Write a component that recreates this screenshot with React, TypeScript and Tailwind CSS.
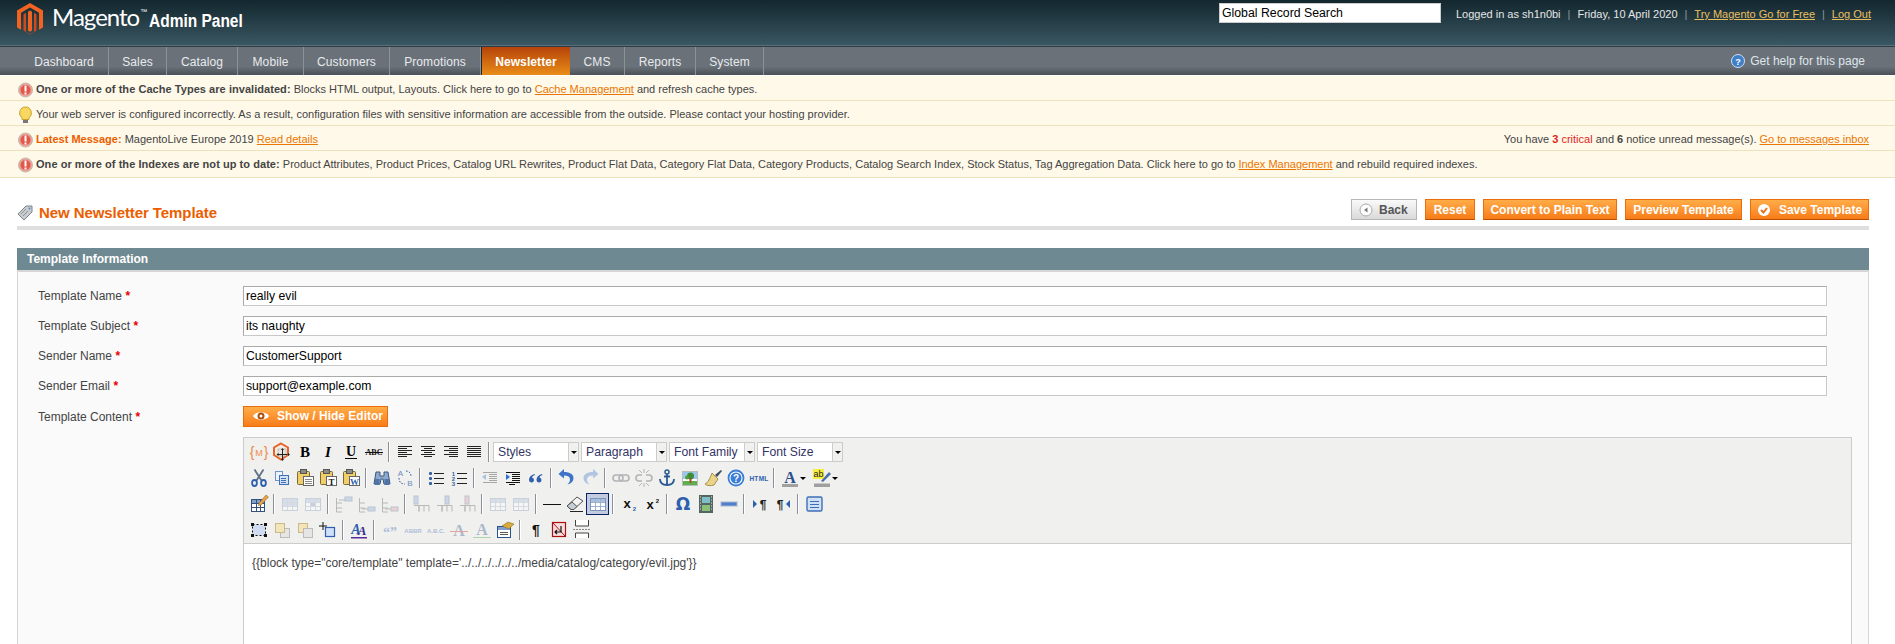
import type { ReactNode } from "react";

const navItems = [
  { name: "Dashboard", width: "w-[89px]" },
  { name: "Sales", width: "w-[58px]" },
  { name: "Catalog", width: "w-[71px]" },
  { name: "Mobile", width: "w-[66px]" },
  { name: "Customers", width: "w-[86px]" },
  { name: "Promotions", width: "w-[91px]" },
  { name: "Newsletter", width: "w-[89px]" },
  { name: "CMS", width: "w-[55px]" },
  { name: "Reports", width: "w-[71px]" },
  { name: "System", width: "w-[68px]" },
];
const fields = [
  { label: "Template Name", value: "really evil" },
  { label: "Template Subject", value: "its naughty" },
  { label: "Sender Name", value: "CustomerSupport" },
  { label: "Sender Email", value: "support@example.com" },
];

function Lines({ rows, color = "#222" }: { rows: [number, number, number][]; color?: string }) {
  return (
    <>
      {rows.map(([y, a, b], i) => (
        <line key={i} x1={a} x2={b} y1={y + 0.5} y2={y + 0.5} stroke={color} />
      ))}
    </>
  );
}

function Sv({ children, faded }: { children: ReactNode; faded?: boolean }) {
  return (
    <svg width="20" height="20" viewBox="0 0 20 20" className={faded ? "opacity-35" : ""}>
      {children}
    </svg>
  );
}

function Doc({ x, y, w = 9, h = 11, fill = "#fff", stroke = "#3f6fb5" }: { x: number; y: number; w?: number; h?: number; fill?: string; stroke?: string }) {
  return <rect x={x + 0.5} y={y + 0.5} width={w} height={h} fill={fill} stroke={stroke} />;
}

function Clipboard({ letter, color = "#222" }: { letter?: string; color?: string }) {
  return (
    <Sv>
      <rect x="2.5" y="3.5" width="12" height="13" rx="1" fill="#f0cf6a" stroke="#7a6a30" />
      <rect x="5.5" y="1.5" width="6" height="4" fill="#8a8a8a" stroke="#555" />
      <rect x="8.5" y="8.5" width="10" height="9" fill="#fff" stroke="#666" />
      {letter ? (
        <text x="13.5" y="16.5" fontSize="9" fontWeight="700" textAnchor="middle" fontFamily="Liberation Serif" fill={color}>
          {letter}
        </text>
      ) : (
        <Lines rows={[[11, 10, 17], [13, 10, 17], [15, 10, 17]]} color="#888" />
      )}
    </Sv>
  );
}

function Grid({ faded, hi }: { faded?: boolean; hi?: "row" | "cell" | "all" }) {
  return (
    <Sv faded={faded}>
      <rect x="2.5" y="4.5" width="15" height="12" fill="#fff" stroke="#7d95b8" />
      <rect x="3" y="5" width="14" height="3" fill="#a9bfdf" />
      {hi === "row" && <rect x="3" y="9" width="14" height="3" fill="#a9bfdf" />}
      {hi === "cell" && <rect x="8" y="9" width="5" height="3" fill="#7d95b8" />}
      <Lines rows={[[8, 3, 17], [12, 3, 17]]} color="#9fb2cc" />
      <line x1="7.5" x2="7.5" y1="5" y2="16" stroke="#9fb2cc" />
      <line x1="12.5" x2="12.5" y1="5" y2="16" stroke="#9fb2cc" />
    </Sv>
  );
}

function TableOp({ kind }: { kind: "a" | "b" | "c" | "d" | "e" | "f" }) {
  const col = kind === "d" || kind === "e" || kind === "f";
  return (
    <Sv faded>
      {col ? (
        <>
          <path d="M3 11.5H8V17.5M8 11.5V17.5M8 11.5H13V17.5M13 11.5H18V17.5" fill="none" stroke="#555" />
          <rect x={kind === "d" ? 3 : kind === "e" ? 11 : 8} y="2" width="4" height="8" fill={kind === "f" ? "#e59a9a" : "#8aa8d8"} stroke="#5a78a8" />
        </>
      ) : (
        <>
          <path d="M2.5 4V9H8M2.5 9V14H8M2.5 14V18H8" fill="none" stroke="#555" />
          <rect x="11" y={kind === "a" ? 3 : 13} width="7" height="4" fill={kind === "c" ? "#e59a9a" : "#8aa8d8"} stroke="#5a78a8" />
          <path d={kind === "a" ? "M5 6H11" : "M5 15H11"} stroke="#555" />
        </>
      )}
    </Sv>
  );
}

const A = ({ fill, bar }: { fill: string; bar: string }) => (
  <Sv>
    <text x="10" y="15" fontSize="16" fontWeight="700" textAnchor="middle" fontFamily="Liberation Serif" fill={fill}>
      A
    </text>
    <rect x="2" y="16" width="16" height="3" fill={bar} />
  </Sv>
);

const icons: Record<string, ReactNode> = {
  widget: (
    <Sv>
      <text x="3" y="14.5" fontSize="14" textAnchor="middle" fontFamily="Liberation Sans" fill="#ee8a4c">{"{"}</text>
      <text x="10" y="13.5" fontSize="9" textAnchor="middle" fontFamily="Liberation Sans" fill="#ee8a4c">M</text>
      <text x="17" y="14.5" fontSize="14" textAnchor="middle" fontFamily="Liberation Sans" fill="#ee8a4c">{"}"}</text>
    </Sv>
  ),
  variable: (
    <Sv>
      <path d="M9 1.5L16 5.5V13L9 17.5L2 13V5.5Z" fill="#f5ece4" stroke="#e8642a" strokeWidth="2" />
      <rect x="6" y="7" width="8" height="7" fill="#e9e4de" stroke="#999" strokeWidth="0.5" />
      <path d="M10.5 8V17M6 12.5H15.5" stroke="#222" />
      <path d="M4.5 12.5L6.5 11V14ZM18 12.5L16 11V14ZM10.5 6L9 8H12ZM10.5 19L9 17H12Z" fill="#222" />
    </Sv>
  ),
  bold: <Sv><text x="10" y="15" fontSize="15" fontWeight="700" textAnchor="middle" fontFamily="Liberation Serif" fill="#000">B</text></Sv>,
  italic: <Sv><text x="10" y="15" fontSize="15" fontWeight="700" fontStyle="italic" textAnchor="middle" fontFamily="Liberation Serif" fill="#000">I</text></Sv>,
  underline: (
    <Sv>
      <text x="10" y="14" fontSize="14" fontWeight="700" textAnchor="middle" fontFamily="Liberation Serif" fill="#000">U</text>
      <rect x="4" y="16" width="12" height="1" fill="#000" />
    </Sv>
  ),
  strike: (
    <Sv>
      <text x="10" y="13" fontSize="8" fontWeight="700" textAnchor="middle" fontFamily="Liberation Serif" fill="#111">ABC</text>
      <rect x="1" y="10" width="18" height="1" fill="#111" />
    </Sv>
  ),
  left: <Sv><Lines rows={[[4, 3, 17], [6, 3, 12], [8, 3, 17], [10, 3, 12], [12, 3, 17], [14, 3, 12]]} /></Sv>,
  center: <Sv><Lines rows={[[4, 3, 17], [6, 6, 14], [8, 3, 17], [10, 6, 14], [12, 3, 17], [14, 6, 14]]} /></Sv>,
  right: <Sv><Lines rows={[[4, 3, 17], [6, 8, 17], [8, 3, 17], [10, 8, 17], [12, 3, 17], [14, 8, 17]]} /></Sv>,
  justify: <Sv><Lines rows={[[4, 3, 17], [6, 3, 17], [8, 3, 17], [10, 3, 17], [12, 3, 17], [14, 3, 17]]} /></Sv>,
  cut: (
    <Sv>
      <path d="M5.5 1.5L12.5 12.5M14.5 1.5L7.5 12.5" stroke="#5f7188" strokeWidth="1.8" />
      <ellipse cx="5.5" cy="15" rx="2.4" ry="3" fill="none" stroke="#2f5fae" strokeWidth="1.8" />
      <ellipse cx="14.5" cy="15" rx="2.4" ry="3" fill="none" stroke="#2f5fae" strokeWidth="1.8" />
    </Sv>
  ),
  copy: (
    <Sv>
      <Doc x={3} y={3} w={7} h={9} fill="#eef3fb" stroke="#6f93c8" />
      <Doc x={7} y={7} w={9} h={9} fill="#cfe0f7" />
      <Lines rows={[[10, 9, 14], [12, 9, 14], [14, 9, 14]]} color="#3f6fb5" />
    </Sv>
  ),
  paste: <Clipboard />,
  pasteText: <Clipboard letter="T" />,
  pasteWord: <Clipboard letter="W" color="#2f5fae" />,
  find: (
    <Sv>
      <path d="M4 4h4v4h4V4h4l2 12h-6l-1-5H9l-1 5H2Z" fill="#8fa8cf" stroke="#39587f" />
      <rect x="3" y="11" width="4.5" height="6" fill="#4f75a8" />
      <rect x="12.5" y="11" width="4.5" height="6" fill="#4f75a8" />
    </Sv>
  ),
  replace: (
    <Sv>
      <text x="5.5" y="8" fontSize="8" textAnchor="middle" fontFamily="Liberation Sans" fill="#6a8ac0">A</text>
      <text x="15" y="18" fontSize="8" textAnchor="middle" fontFamily="Liberation Sans" fill="#6a8ac0">B</text>
      <path d="M4 10C4 15 7 16 10 16" fill="none" stroke="#2f5fae" strokeDasharray="1.5 1.5" />
      <path d="M11 3C14 3 16 5 16 8" fill="none" stroke="#2f5fae" strokeDasharray="1.5 1.5" />
    </Sv>
  ),
  bullets: (
    <Sv>
      <rect x="3" y="4" width="3" height="3" rx="1" fill="#35619f" />
      <rect x="3" y="9" width="3" height="3" rx="1" fill="#35619f" />
      <rect x="3" y="14" width="3" height="3" rx="1" fill="#35619f" />
      <Lines rows={[[5, 8, 18], [10, 8, 18], [15, 8, 18]]} />
    </Sv>
  ),
  numbers: (
    <Sv>
      <text x="4.5" y="8" fontSize="6" fontWeight="700" textAnchor="middle" fontFamily="Liberation Sans" fill="#35619f">1</text>
      <text x="4.5" y="13" fontSize="6" fontWeight="700" textAnchor="middle" fontFamily="Liberation Sans" fill="#35619f">2</text>
      <text x="4.5" y="18" fontSize="6" fontWeight="700" textAnchor="middle" fontFamily="Liberation Sans" fill="#35619f">3</text>
      <Lines rows={[[5, 8, 18], [10, 8, 18], [15, 8, 18]]} />
    </Sv>
  ),
  outdent: (
    <Sv faded>
      <Lines rows={[[4, 3, 17], [6, 9, 17], [8, 9, 17], [10, 9, 17], [12, 9, 17], [14, 3, 17]]} />
      <path d="M2 9L6 6V12Z" fill="#2f6fce" />
    </Sv>
  ),
  indent: (
    <Sv>
      <Lines rows={[[4, 3, 17], [6, 9, 17], [8, 9, 17], [10, 9, 17], [12, 9, 17], [14, 3, 17], [16, 6, 12]]} color="#111" />
      <path d="M7 9L3 6V12Z" fill="#2f6fce" />
    </Sv>
  ),
  quote: (
    <Sv>
      <path d="M8.5 6C5 7 3 9 3 12a2.5 2.5 0 1 0 3-2.4C6.3 8.5 7.2 7.6 9 7ZM16 6c-3.5 1-5.5 3-5.5 6a2.5 2.5 0 1 0 3-2.4C13.8 8.5 14.7 7.6 16.5 7Z" fill="#2f5fae" />
    </Sv>
  ),
  undo: (
    <Sv>
      <path d="M7 4V1L1.5 6 7 10.5V7.5c4 0 6 1.5 6 4 0 2-1 3.5-2.5 5 4-1 6-3.5 6-6.5C16.5 6.5 13 4 7 4Z" fill="#3d74c9" />
    </Sv>
  ),
  redo: (
    <Sv faded>
      <path d="M13 4V1l5.5 5L13 10.5V7.5c-4 0-6 1.5-6 4 0 2 1 3.5 2.5 5-4-1-6-3.5-6-6.5C3.5 6.5 7 4 13 4Z" fill="#3d74c9" />
    </Sv>
  ),
  link: (
    <Sv faded>
      <rect x="2" y="7" width="10" height="6" rx="3" fill="none" stroke="#445" strokeWidth="1.6" />
      <rect x="8" y="7" width="10" height="6" rx="3" fill="none" stroke="#445" strokeWidth="1.6" />
    </Sv>
  ),
  unlink: (
    <Sv faded>
      <path d="M8 7H5a3 3 0 0 0 0 6h3M12 7h3a3 3 0 0 1 0 6h-3" fill="none" stroke="#445" strokeWidth="1.6" />
      <path d="M5 2L8 5M15 2L12 5M10 1V5M5 18L8 15M15 18L12 15M10 15V19" stroke="#445" />
    </Sv>
  ),
  anchor: (
    <Sv>
      <circle cx="10" cy="4" r="2" fill="none" stroke="#2d5a94" strokeWidth="1.5" />
      <path d="M10 6V17M3 11C3 15 6 17 10 17S17 15 17 11M7 8.5H13" fill="none" stroke="#2d5a94" strokeWidth="1.8" />
    </Sv>
  ),
  image: (
    <Sv>
      <rect x="2.5" y="3.5" width="15" height="14" fill="#fff" stroke="#bbb" />
      <rect x="3" y="4" width="14" height="7" fill="#9cc7ee" />
      <rect x="3" y="13" width="14" height="4" fill="#5fb04a" />
      <circle cx="10.5" cy="8" r="3.5" fill="#3f8d34" />
      <circle cx="7" cy="9.5" r="2" fill="#4fa03c" />
      <rect x="9.5" y="10" width="2" height="5" fill="#a0502a" />
    </Sv>
  ),
  cleanup: (
    <Sv>
      <path d="M12 7L18 2L19 3L14 9Z" fill="#3c4a5a" />
      <path d="M9 5L15 11L11 17C8 18 4 18 2 16C5 15 7 10 9 5Z" fill="#e9d48a" stroke="#a58f45" />
    </Sv>
  ),
  help: (
    <Sv>
      <circle cx="10" cy="10" r="7.5" fill="#fff" stroke="#3a7dd6" strokeWidth="1.8" />
      <circle cx="10" cy="10" r="5.5" fill="#3a7dd6" />
      <text x="10" y="13.5" fontSize="10" fontWeight="700" textAnchor="middle" fontFamily="Liberation Sans" fill="#fff">?</text>
    </Sv>
  ),
  html: (
    <Sv>
      <text x="10" y="13" fontSize="6.5" fontWeight="700" textAnchor="middle" fontFamily="Liberation Sans" fill="#2d5fae" letterSpacing="0.3">HTML</text>
    </Sv>
  ),
  fore: <A fill="#2d4f8a" bar="#a0a0a0" />,
  hilite: (
    <Sv>
      <rect x="1" y="1" width="11" height="10" fill="#f8ee3e" />
      <text x="6.5" y="9" fontSize="9" textAnchor="middle" fontFamily="Liberation Sans" fill="#222">ab</text>
      <path d="M9 13L17 4L19 6L11 14Z" fill="#4d6fa8" />
      <rect x="2" y="15.5" width="16" height="3.5" fill="#a0a0a0" />
    </Sv>
  ),
  tableProps: (
    <Sv>
      <rect x="2.5" y="5.5" width="13" height="12" fill="#fff" stroke="#35507a" />
      <rect x="3" y="6" width="12" height="3" fill="#7fa0cf" />
      <Lines rows={[[9, 3, 15], [13, 3, 15]]} color="#35507a" />
      <line x1="7.5" x2="7.5" y1="6" y2="17" stroke="#35507a" />
      <line x1="11.5" x2="11.5" y1="6" y2="17" stroke="#35507a" />
      <path d="M10 9L17 1L19.5 3L12 11L9.5 11.5Z" fill="#e8a248" stroke="#85602a" strokeWidth="0.5" />
    </Sv>
  ),
  rowProps: <Grid faded hi="row" />,
  cellProps: <Grid faded hi="cell" />,
  rowA: <TableOp kind="a" />,
  rowB: <TableOp kind="b" />,
  rowC: <TableOp kind="c" />,
  colA: <TableOp kind="d" />,
  colB: <TableOp kind="e" />,
  colC: <TableOp kind="f" />,
  split: <Grid faded />,
  merge: <Grid faded hi="all" />,
  hr: <Sv><rect x="1" y="10" width="18" height="1" fill="#111" /></Sv>,
  erase: (
    <Sv>
      <path d="M2 12L12 3L18 7L9 15H5Z" fill="#f4f4f4" stroke="#555" />
      <path d="M2 12L6 15.5H9L12 12.5L7 8Z" fill="#c6cfd8" stroke="#555" />
      <rect x="5" y="17" width="13" height="1" fill="#222" />
    </Sv>
  ),
  visualAid: <Grid />,
  sub: (
    <Sv>
      <text x="8" y="14" fontSize="13" fontWeight="700" textAnchor="middle" fontFamily="Liberation Sans" fill="#111">x</text>
      <text x="15.5" y="17" fontSize="6" fontWeight="700" textAnchor="middle" fontFamily="Liberation Sans" fill="#2d5fae">2</text>
    </Sv>
  ),
  sup: (
    <Sv>
      <text x="8" y="15" fontSize="13" fontWeight="700" textAnchor="middle" fontFamily="Liberation Sans" fill="#111">x</text>
      <text x="15.5" y="9" fontSize="6" fontWeight="700" textAnchor="middle" fontFamily="Liberation Sans" fill="#111">2</text>
    </Sv>
  ),
  omega: <Sv><text x="10" y="16" fontSize="17" fontWeight="700" textAnchor="middle" fontFamily="DejaVu Sans" fill="#2d5fae">Ω</text></Sv>,
  media: (
    <Sv>
      <rect x="3" y="1" width="14" height="18" fill="#55655f" />
      <rect x="6" y="3" width="8" height="6" fill="#7fc0c8" />
      <rect x="6" y="11" width="8" height="6" fill="#8ac07a" />
      <path d="M4 3h1M4 6h1M4 9h1M4 12h1M4 15h1M15 3h1M15 6h1M15 9h1M15 12h1M15 15h1" stroke="#dfe6e0" />
    </Sv>
  ),
  bar: <Sv><rect x="2" y="8" width="16" height="4" fill="#4c7fce" stroke="#a8b5cc" /></Sv>,
  ltr: (
    <Sv>
      <path d="M3 6L7 10L3 14Z" fill="#2d5fae" />
      <text x="13" y="15" fontSize="12" fontWeight="700" textAnchor="middle" fontFamily="Liberation Sans" fill="#222">¶</text>
    </Sv>
  ),
  rtl: (
    <Sv>
      <text x="7" y="15" fontSize="12" fontWeight="700" textAnchor="middle" fontFamily="Liberation Sans" fill="#222">¶</text>
      <path d="M17 6L13 10L17 14Z" fill="#2d5fae" />
    </Sv>
  ),
  fullscreen: (
    <Sv>
      <rect x="3" y="3" width="15" height="14" rx="1.5" fill="#cfe0f7" stroke="#3f6fb5" strokeWidth="1.4" />
      <Lines rows={[[7, 6, 15], [10, 6, 15], [13, 6, 15]]} color="#3f6fb5" />
    </Sv>
  ),
  layer: (
    <Sv>
      <rect x="3.5" y="4.5" width="13" height="11" fill="#cfdcf2" stroke="#111" strokeDasharray="2 2" />
      <path d="M2 3h3v3H2zM15 3h3v3h-3zM2 14h3v3H2zM15 14h3v3h-3z" fill="#111" />
    </Sv>
  ),
  forward: (
    <Sv>
      <rect x="8.5" y="8.5" width="9" height="9" fill="#e5e5e5" stroke="#bbb" />
      <rect x="3.5" y="3.5" width="9" height="9" fill="#f4e5b8" stroke="#cbb98a" />
    </Sv>
  ),
  backward: (
    <Sv>
      <rect x="3.5" y="3.5" width="9" height="9" fill="#f4e5b8" stroke="#cbb98a" />
      <rect x="8.5" y="8.5" width="9" height="9" fill="#e5e5e5" stroke="#bbb" />
    </Sv>
  ),
  absolute: (
    <Sv>
      <path d="M5 2V10M1 6H9" stroke="#111" />
      <rect x="7.5" y="7.5" width="9" height="9" fill="#cfe0f7" stroke="#2d5fae" strokeWidth="1.2" />
    </Sv>
  ),
  style: (
    <Sv>
      <text x="7" y="14" fontSize="14" fontWeight="700" fontStyle="italic" textAnchor="middle" fontFamily="Liberation Serif" fill="#2d5fae">A</text>
      <text x="13" y="15" fontSize="13" fontWeight="700" fontStyle="italic" textAnchor="middle" fontFamily="Liberation Serif" fill="#3c2a8a">A</text>
      <rect x="2" y="17" width="16" height="1.5" fill="#5a2a9a" />
    </Sv>
  ),
  cite: <Sv faded><text x="10" y="17" fontSize="14" fontWeight="700" textAnchor="middle" fontFamily="Liberation Serif" fill="#2d5fae">“”</text></Sv>,
  abbr: <Sv faded><text x="10" y="13" fontSize="6" fontWeight="700" textAnchor="middle" fontFamily="Liberation Sans" fill="#2d5fae">ABBR</text></Sv>,
  acro: <Sv faded><text x="10" y="13" fontSize="6" fontWeight="700" textAnchor="middle" fontFamily="Liberation Sans" fill="#2d5fae">A.B.C.</text></Sv>,
  del: (
    <Sv faded>
      <text x="10" y="16" fontSize="16" fontWeight="700" textAnchor="middle" fontFamily="Liberation Serif" fill="#2d4f8a">A</text>
      <rect x="1" y="11" width="18" height="1" fill="#d11" />
    </Sv>
  ),
  ins: (
    <Sv faded>
      <text x="10" y="15" fontSize="16" fontWeight="700" textAnchor="middle" fontFamily="Liberation Serif" fill="#2d4f8a">A</text>
      <rect x="1" y="17" width="18" height="1" fill="#2a2" />
    </Sv>
  ),
  attribs: (
    <Sv>
      <rect x="2.5" y="6.5" width="13" height="11" fill="#fff" stroke="#2d4f8a" />
      <rect x="3" y="7" width="12" height="3" fill="#7fa0cf" />
      <Lines rows={[[12, 5, 13], [14, 5, 13]]} color="#555" />
      <path d="M7 6L13 2L19 4L14 9Z" fill="#d9a93a" stroke="#7a6020" strokeWidth="0.5" />
    </Sv>
  ),
  pilcrow: <Sv><text x="10" y="15" fontSize="14" fontWeight="700" textAnchor="middle" fontFamily="Liberation Sans" fill="#111">¶</text></Sv>,
  nonbreak: (
    <Sv>
      <rect x="3.5" y="2.5" width="13" height="14" fill="#f7dede" stroke="#a11" strokeWidth="1.2" />
      <path d="M4 3L16 16" stroke="#a11" />
      <path d="M12 6V12H6M8 10L6 12L8 14" fill="none" stroke="#111" strokeWidth="1.2" />
    </Sv>
  ),
  pagebreak: (
    <Sv>
      <path d="M3.5 0V6H16.5V0M3.5 18V13H16.5V18" fill="#fff" stroke="#444" />
      <path d="M1 9.5H19" stroke="#888" strokeDasharray="2 1" />
    </Sv>
  ),
};

const rows: string[][] = [
  ["widget", "variable", "bold", "italic", "underline", "strike", "|", "left", "center", "right", "justify", "|", "selects"],
  ["cut", "copy", "paste", "pasteText", "pasteWord", "|", "find", "replace", "|", "bullets", "numbers", "|", "outdent", "indent", "quote", "|", "undo", "redo", "|", "link", "unlink", "anchor", "image", "cleanup", "help", "html", "|", "fore*", "hilite*"],
  ["tableProps", "|", "rowProps", "cellProps", "|", "rowA", "rowB", "rowC", "|", "colA", "colB", "colC", "|", "split", "merge", "|", "hr", "erase", "visualAid", "|", "sub", "sup", "|", "omega", "media", "bar", "|", "ltr", "rtl", "|", "fullscreen"],
  ["layer", "forward", "backward", "absolute", "|", "style", "|", "cite", "abbr", "acro", "del", "ins", "attribs", "|", "pilcrow", "nonbreak", "pagebreak"],
];

function ToolSelect({ label }: { label: string }) {
  return (
    <div className="flex h-[20px] w-[86px] border border-[#cccccc] bg-white">
      <span className="flex-1 pl-[4px] text-[12.2px] leading-[18px] text-[#333366]">{label}</span>
      <span className="flex w-[10px] items-center justify-center border-l border-[#cccccc] bg-[#f0f0ee]">
        <span className="h-0 w-0 border-x-[3px] border-t-[3px] border-x-transparent border-t-black"></span>
      </span>
    </div>
  );
}

function Toolbar() {
  return (
    <div className="border-b border-[#cccccc] bg-[#f0f0ee] pt-px">
      {rows.map((row, r) => (
        <div key={r} className="flex h-[26px] items-center pl-[3px]">
          {row.map((name, i) => {
            if (name === "|") {
              return (
                <div key={i} className="flex w-[8px] justify-center">
                  <div className="h-[20px] w-px bg-[#8d8d9c]"></div>
                  <div className="h-[20px] w-px bg-white"></div>
                </div>
              );
            }
            if (name === "selects") {
              return (
                <div key={i} className="flex gap-[2px]">
                  <ToolSelect label="Styles" />
                  <ToolSelect label="Paragraph" />
                  <ToolSelect label="Font Family" />
                  <ToolSelect label="Font Size" />
                </div>
              );
            }
            const split = name.endsWith("*");
            const key = split ? name.slice(0, -1) : name;
            const active = key === "visualAid";
            return (
              <div key={i} className="flex items-center">
                <div className={active ? "flex h-[22px] w-[23px] items-center justify-center border border-[#0a246a] bg-[#c2cbe0]" : "flex h-[22px] w-[23px] items-center justify-center"}>
                  {icons[key]}
                </div>
                {split && <span className="mr-[1px] ml-[-1px] h-0 w-0 border-x-[3px] border-t-[3px] border-x-transparent border-t-black"></span>}
                {split && <span className="w-[3px]"></span>}
              </div>
            );
          })}
        </div>
      ))}
    </div>
  );
}

function Notice({ icon, children, right, last }: { icon: "error" | "bulb"; children: ReactNode; right?: ReactNode; last?: boolean }) {
  return (
    <div className={`flex ${last ? "h-[27px] pt-px" : "h-[25px] pt-[3px]"} items-center border-b border-[#eee2be] bg-[#fff9e9] pr-[26px] pl-[18px] text-[11px] text-[#444444]`}>
      {icon === "error" ? (
        <svg width="15" height="16" viewBox="0 0 15 16" className="mr-[3px] shrink-0">
          <circle cx="7.5" cy="8" r="7" fill="#eba197" stroke="#c5bcae" />
          <circle cx="7.5" cy="8" r="5" fill="#e2594c" />
          <rect x="6.5" y="3.5" width="2" height="6" fill="#fff" />
          <rect x="6.5" y="10.5" width="2" height="2" fill="#fff" />
        </svg>
      ) : (
        <svg width="15" height="18" viewBox="0 0 15 18" className="mr-[3px] shrink-0">
          <path d="M7.5 1a6 6 0 0 0-3.5 10.8V13.5h7v-1.7A6 6 0 0 0 7.5 1Z" fill="#f8d860" stroke="#c9a22c" />
          <rect x="5" y="14" width="5" height="3" fill="#777" />
        </svg>
      )}
      <div className="flex-1 whitespace-nowrap">{children}</div>
      {right && <div className="whitespace-nowrap">{right}</div>}
    </div>
  );
}

const noticeLink = "text-[#ea7601] underline";

function OrangeButton({ children, width }: { children: ReactNode; width: string }) {
  return <div className={`flex h-[21px] ${width} items-center justify-center border border-[#e96d0a] border-b-[#b84f00] bg-gradient-to-b from-[#ffac47] to-[#f77c16] whitespace-nowrap text-white`}>{children}</div>;
}

export default function App() {
  return (
    <div className="h-[644px] overflow-hidden bg-white font-['Liberation_Sans',Arial,sans-serif] text-[12px] text-[#444444]">
      {/* header */}
      <div className="flex h-[46px] justify-between border-b border-[#58707b] bg-gradient-to-b from-[#13272e] to-[#3a5763] pr-[24px] pl-[17px]">
        <div className="flex items-start pt-[2px]">
          <svg width="26" height="32" viewBox="0 0 26 32" className="mt-[1px]">
            <path d="M13 0L26 7.5V24.5L22 26.8V9.8L13 4.6L4 9.8V26.8L0 24.5V7.5Z" fill="#f26322" />
            <path d="M11 8.8L13 7.6L15 8.8V27.5L13 28.7L11 27.5Z" fill="#f26322" />
            <path d="M6.5 11.2L9 9.8V28.8L13 31L17 28.8V9.8L19.5 11.2V27.5L13 31.5L6.5 27.5Z" fill="#d0491a" />
          </svg>
          <span className="ml-[9px] font-['Lato',sans-serif] text-[24px] leading-[30px] tracking-[-1px] text-white">Magento</span>
          <span className="mt-[5px] ml-[1px] text-[7px] leading-[10px] text-white">™</span>
          <span className="mt-[8px] ml-[2px] origin-left scale-x-[0.86] text-[18px] leading-[22px] font-bold whitespace-nowrap text-white">Admin Panel</span>
        </div>
        <div className="flex items-start pt-[3px]">
          <div className="mr-[15px] flex h-[20px] w-[222px] items-center border border-[#cccccc] bg-white pl-[2px] text-[12.3px] text-black">Global Record Search</div>
          <div className="pt-[3px] text-[11px] whitespace-nowrap text-[#e6e6e6]">
            Logged in as sh1n0bi<span className="mx-[7px] text-[#8a9aa2]">|</span>Friday, 10 April 2020<span className="mx-[7px] text-[#8a9aa2]">|</span>
            <span className="text-[#ebbf5f] underline">Try Magento Go for Free</span>
            <span className="mx-[7px] text-[#8a9aa2]">|</span>
            <span className="text-[#ebbf5f] underline">Log Out</span>
          </div>
        </div>
      </div>

      {/* nav */}
      <div className="flex h-[29px] items-stretch justify-between border-t border-[#2e3d44] bg-gradient-to-b from-[#6a7179] from-70% to-[#4b5056] pl-[20px] text-[12px]">
        <div className="flex tracking-[0.1px]">
          {navItems.map((item) =>
            item.name === "Newsletter" ? (
              <div key={item.name} className={`flex ${item.width} items-center justify-center border-l border-[#23282c] bg-gradient-to-b from-[#b5420a] to-[#e98c18] pt-[2px] font-bold text-white`}>
                {item.name}
              </div>
            ) : (
              <div key={item.name} className={`flex ${item.width} items-center justify-center border-r border-[#8c9298] pt-[2px] text-[#e8ebed]`}>
                {item.name}
              </div>
            ),
          )}
        </div>
        <div className="flex items-center pr-[30px] text-[#dfe6ea]">
          <svg width="14" height="14" viewBox="0 0 14 14" className="mr-[5px]">
            <circle cx="7" cy="7" r="6.5" fill="#3f7fc8" stroke="#cfe0f2" />
            <text x="7" y="10.5" fontSize="9" fontWeight="700" textAnchor="middle" fontFamily="Liberation Sans" fill="#fff">?</text>
          </svg>
          Get help for this page
        </div>
      </div>

      {/* notices */}
      <div className="mt-px">
        <Notice icon="error">
          <b className="tracking-[0.05px]">One or more of the Cache Types are invalidated:</b> Blocks HTML output, Layouts. Click here to go to <span className={noticeLink}>Cache Management</span> and refresh cache types.
        </Notice>
        <Notice icon="bulb">Your web server is configured incorrectly. As a result, configuration files with sensitive information are accessible from the outside. Please contact your hosting provider.</Notice>
        <Notice
          icon="error"
          right={
            <>
              You have <b className="text-[#df1f1f]">3</b> <span className="text-[#df1f1f]">critical</span> and <b>6</b> notice unread message(s). <span className={noticeLink}>Go to messages inbox</span>
            </>
          }
        >
          <b className="text-[#eb5e00]">Latest Message:</b> MagentoLive Europe 2019 <span className={noticeLink}>Read details</span>
        </Notice>
        <Notice icon="error" last>
          <b className="tracking-[0.05px]">One or more of the Indexes are not up to date:</b> Product Attributes, Product Prices, Catalog URL Rewrites, Product Flat Data, Category Flat Data, Category Products, Catalog Search Index, Stock Status, Tag Aggregation Data. Click here to go to <span className={noticeLink}>Index Management</span> and rebuild required indexes.
        </Notice>
      </div>

      {/* page */}
      <div className="pr-[26px] pl-[17px]">
        <div className="mt-[20px] flex h-[32px] items-start justify-between border-b-[4px] border-[#dfdfdf]">
          <div className="flex items-center">
            <svg width="16" height="16" viewBox="0 0 16 16" className="mt-[5px] mr-[6px]">
              <path d="M1 9L9 1H15V7L7 15Z" fill="#c9ccce" stroke="#7f868b" />
              <path d="M4 9L9 4M6 11L11 6" stroke="#8d9499" />
              <circle cx="12.5" cy="3.5" r="1" fill="#4f8bc9" />
            </svg>
            <h3 className="mt-[6px] text-[15px] leading-[18px] font-bold tracking-[-0.08px] text-[#eb5e00]">New Newsletter Template</h3>
          </div>
          <div className="flex gap-[8px] pt-[1px] text-[12px] font-bold">
            <div className="flex h-[21px] w-[66px] items-center border border-[#b6b6b6] bg-gradient-to-b from-[#fafafa] to-[#d9d9d9] pl-[7px] text-[#555555]">
              <svg width="14" height="14" viewBox="0 0 14 14" className="mr-[6px]">
                <circle cx="7" cy="7" r="6" fill="#fff" stroke="#aaa" />
                <path d="M8.5 4.5V9.5L5 7Z" fill="#777" />
              </svg>
              Back
            </div>
            <OrangeButton width="w-[50px]">Reset</OrangeButton>
            <OrangeButton width="w-[134px]">Convert to Plain Text</OrangeButton>
            <OrangeButton width="w-[117px]">Preview Template</OrangeButton>
            <OrangeButton width="w-[119px]">
              <svg width="14" height="14" viewBox="0 0 14 14" className="mr-[8px]">
                <circle cx="7" cy="7" r="6" fill="#fff" />
                <path d="M4 7L6.5 9.5L10 5" fill="none" stroke="#e8711a" strokeWidth="2" />
              </svg>
              Save Template
            </OrangeButton>
          </div>
        </div>

        <div className="mt-[18px] flex h-[22px] items-center bg-[#6f8992] pl-[10px] font-bold text-white">Template Information</div>

        <div className="h-[400px] border border-t-2 border-[#d6d6d6] bg-[#fafafa] pt-[14px] pl-[20px]">
          {fields.map((f) => (
            <div key={f.label} className="mb-[10px] flex h-[20px] items-center">
              <div className="w-[205px] text-[#444444]">
                {f.label} <span className="font-bold text-[#eb0000]">*</span>
              </div>
              <div className="flex h-[20px] w-[1584px] items-center border border-[#aaaaaa] border-r-[#c8c8c8] border-b-[#c8c8c8] bg-white pl-[2px] text-[12.2px] text-black">{f.value}</div>
            </div>
          ))}
          <div className="flex">
            <div className="w-[205px] pt-[2px] text-[#444444]">
              Template Content <span className="font-bold text-[#eb0000]">*</span>
            </div>
            <div className="flex h-[21px] w-[145px] items-center border border-[#e96d0a] bg-gradient-to-b from-[#ffac47] to-[#f77c16] pb-px pl-[8px] font-bold text-white">
              <svg width="18" height="12" viewBox="0 0 18 12" className="mr-[7px]">
                <path d="M1 6C4 1 14 1 17 6C14 11 4 11 1 6Z" fill="#fff" />
                <circle cx="9" cy="6" r="3.5" fill="#a8500f" />
                <circle cx="9" cy="6" r="1.5" fill="#fff" />
              </svg>
              Show / Hide Editor
            </div>
          </div>
          <div className="mt-[10px] ml-[205px] w-[1609px] border border-[#cccccc] bg-white">
            <Toolbar />
            <div className="h-[200px] px-[8px] pt-[10px] text-[12.02px] text-[#444444]">
              {"{{block type=\"core/template\" template='../../../../../../media/catalog/category/evil.jpg'}}"}
            </div>
          </div>
        </div>
      </div>
    </div>
  );
}
